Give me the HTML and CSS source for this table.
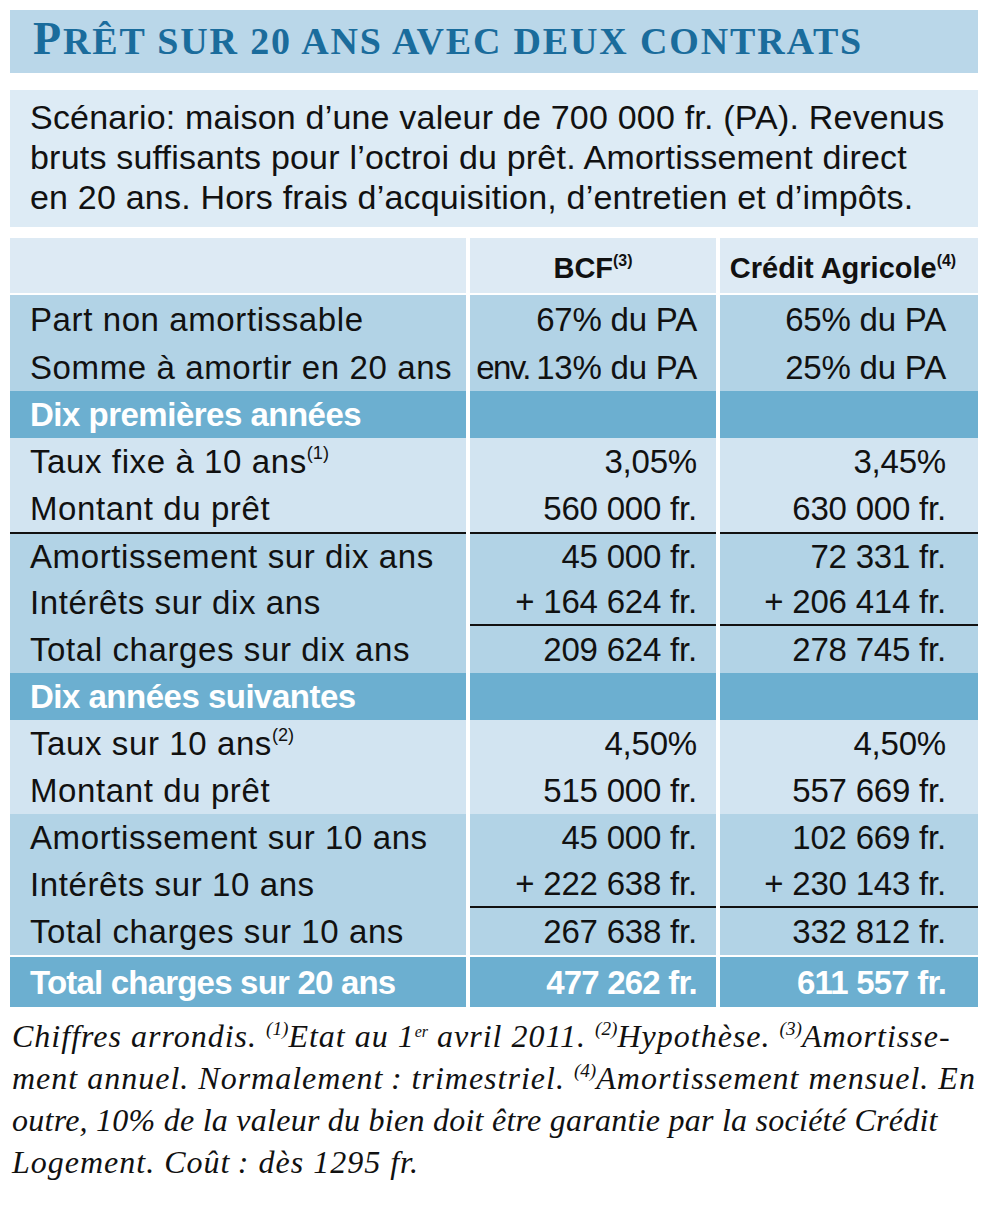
FILE: index.html
```html
<!DOCTYPE html>
<html lang="fr">
<head>
<meta charset="utf-8">
<title>Prêt sur 20 ans avec deux contrats</title>
<link rel="stylesheet" href="styles.css">
</head>
<body>
<div class="page">
  <div class="title-bar">
    <h1 class="title"><span class="cap">P</span>RÊT SUR 20 ANS AVEC DEUX CONTRATS</h1>
  </div>

  <div class="scenario">
    <p class="scenario-text">Scénario: maison d’une valeur de 700 000 fr. (PA). Revenus<br>bruts suffisants pour l’octroi du prêt. Amortissement direct<br>en 20 ans. Hors frais d’acquisition, d’entretien et d’impôts.</p>
  </div>

  <div class="tbl">
    <div class="row head">
      <div class="cell c1"></div>
      <div class="cell c2"><span>BCF<sup>(3)</sup></span></div>
      <div class="cell c3"><span>Crédit Agricole<sup>(4)</sup></span></div>
    </div>

    <div class="row mid tall">
      <div class="cell c1"><span>Part non amortissable</span></div>
      <div class="cell c2"><span>67% du PA</span></div>
      <div class="cell c3"><span>65% du PA</span></div>
    </div>
    <div class="row mid tall">
      <div class="cell c1"><span>Somme à amortir en 20 ans</span></div>
      <div class="cell c2"><span><span class="narrow">env.</span>&thinsp;13% du PA</span></div>
      <div class="cell c3"><span>25% du PA</span></div>
    </div>

    <div class="row dark">
      <div class="cell c1"><span>Dix premières années</span></div>
      <div class="cell c2"></div>
      <div class="cell c3"></div>
    </div>
    <div class="row light">
      <div class="cell c1"><span>Taux fixe à 10 ans<sup>(1)</sup></span></div>
      <div class="cell c2"><span>3,05%</span></div>
      <div class="cell c3"><span>3,45%</span></div>
    </div>
    <div class="row light">
      <div class="cell c1"><span>Montant du prêt</span></div>
      <div class="cell c2"><span>560 000 fr.</span></div>
      <div class="cell c3"><span>630 000 fr.</span></div>
    </div>

    <div class="row mid rule-top">
      <div class="cell c1"><span>Amortissement sur dix ans</span></div>
      <div class="cell c2"><span>45 000 fr.</span></div>
      <div class="cell c3"><span>72 331 fr.</span></div>
    </div>
    <div class="row mid rule-bottom">
      <div class="cell c1"><span>Intérêts sur dix ans</span></div>
      <div class="cell c2"><span>+ 164 624 fr.</span></div>
      <div class="cell c3"><span>+ 206 414 fr.</span></div>
    </div>
    <div class="row mid">
      <div class="cell c1"><span>Total charges sur dix ans</span></div>
      <div class="cell c2"><span>209 624 fr.</span></div>
      <div class="cell c3"><span>278 745 fr.</span></div>
    </div>

    <div class="row dark">
      <div class="cell c1"><span>Dix années suivantes</span></div>
      <div class="cell c2"></div>
      <div class="cell c3"></div>
    </div>
    <div class="row light">
      <div class="cell c1"><span>Taux sur 10 ans<sup>(2)</sup></span></div>
      <div class="cell c2"><span>4,50%</span></div>
      <div class="cell c3"><span>4,50%</span></div>
    </div>
    <div class="row light">
      <div class="cell c1"><span>Montant du prêt</span></div>
      <div class="cell c2"><span>515 000 fr.</span></div>
      <div class="cell c3"><span>557 669 fr.</span></div>
    </div>

    <div class="row mid">
      <div class="cell c1"><span>Amortissement sur 10 ans</span></div>
      <div class="cell c2"><span>45 000 fr.</span></div>
      <div class="cell c3"><span>102 669 fr.</span></div>
    </div>
    <div class="row mid rule-bottom">
      <div class="cell c1"><span>Intérêts sur 10 ans</span></div>
      <div class="cell c2"><span>+ 222 638 fr.</span></div>
      <div class="cell c3"><span>+ 230 143 fr.</span></div>
    </div>
    <div class="row mid">
      <div class="cell c1"><span>Total charges sur 10 ans</span></div>
      <div class="cell c2"><span>267 638 fr.</span></div>
      <div class="cell c3"><span>332 812 fr.</span></div>
    </div>

    <div class="row dark total">
      <div class="cell c1"><span>Total charges sur 20 ans</span></div>
      <div class="cell c2"><span>477 262 fr.</span></div>
      <div class="cell c3"><span>611 557 fr.</span></div>
    </div>
  </div>

  <p class="notes">Chiffres arrondis. <sup>(1)</sup>Etat au 1<sup class="er">er</sup> avril 2011. <sup>(2)</sup>Hypothèse. <sup>(3)</sup>Amortisse-<br>ment annuel. Normalement&thinsp;: trimestriel. <sup>(4)</sup>Amortissement mensuel. En<br><span class="tight">outre, 10% de la valeur du bien doit être garantie par la société Crédit</span><br>Logement. Coût&thinsp;: dès 1295 fr.</p>
</div>
</body>
</html>
```

FILE: styles.css
```css
* { box-sizing: border-box; }

html, body {
  margin: 0;
  padding: 0;
  background: #ffffff;
}

.page {
  width: 1000px;
  padding: 10px 22px 0 10px;
}

/* ---------- Title ---------- */
.title-bar {
  height: 63px;
  background: #bad7e9;
  padding-left: 23px;
}

.title {
  margin: 0;
  font-family: "Liberation Serif", "Times New Roman", serif;
  font-weight: bold;
  font-size: 38px;
  line-height: 62px;
  letter-spacing: 1.85px;
  color: #1a6c9c;
  white-space: nowrap;
}

.title .cap {
  font-size: 46px;
  line-height: 1;
}

/* ---------- Scenario ---------- */
.scenario {
  margin-top: 17px;
  background: #ddebf5;
  padding: 7px 0 10px 20px;
}

.scenario-text {
  margin: 0;
  font-family: "Liberation Sans", Arial, sans-serif;
  font-size: 34px;
  line-height: 40px;
  letter-spacing: 0.2px;
  color: #111;
  white-space: nowrap;
}

/* ---------- Table ---------- */
.tbl {
  margin-top: 11px;
  font-family: "Liberation Sans", Arial, sans-serif;
  color: #111;
}

.row {
  display: grid;
  grid-template-columns: 456px 246px 258px;
  column-gap: 4px;
  height: 47px;
}

.row.tall { height: 48px; }

.cell {
  display: flex;
  align-items: center;
  font-size: 33px;
  letter-spacing: 0.6px;
  white-space: nowrap;
  padding-top: 1px;
}

.c1 { padding-left: 20px; }
.c2 { justify-content: flex-end; padding-right: 19px; letter-spacing: -0.2px; }
.c3 { justify-content: flex-end; padding-right: 32px; letter-spacing: -0.2px; }

.narrow { letter-spacing: -1.6px; }

.head {
  height: 55px;
  margin-bottom: 2px;
}
.head .cell {
  background: #ddeaf4;
  font-weight: bold;
  font-size: 29px;
  letter-spacing: 0;
  padding-top: 6px;
}
.head .c2, .head .c3 {
  justify-content: center;
  padding-right: 0;
}
.head .c3 { padding-right: 12px; }

.mid .cell { background: #b2d3e6; }
.light .cell { background: #d2e4f1; }
.dark .cell {
  background: #6cafd0;
  color: #ffffff;
  font-weight: bold;
  letter-spacing: -0.5px;
}

.rule-top .cell { border-top: 2px solid #111; }
.rule-bottom .c2, .rule-bottom .c3 { border-bottom: 2px solid #111; }

.total {
  height: 50px;
  margin-top: 2px;
}
.total .cell { font-size: 33px; letter-spacing: -0.8px; }

sup {
  font-size: 0.55em;
  line-height: 0;
  vertical-align: 0.75em;
  letter-spacing: 0;
}

/* ---------- Notes ---------- */
.notes {
  margin: 8px 0 0 2px;
  font-family: "Liberation Serif", "Times New Roman", serif;
  font-style: italic;
  font-size: 32px;
  line-height: 42px;
  letter-spacing: 1px;
  color: #111;
  white-space: nowrap;
}

.notes .tight { letter-spacing: 0.25px; }

.notes sup {
  font-size: 0.6em;
  vertical-align: 0.65em;
}
.notes sup.er { font-size: 0.5em; }
```
